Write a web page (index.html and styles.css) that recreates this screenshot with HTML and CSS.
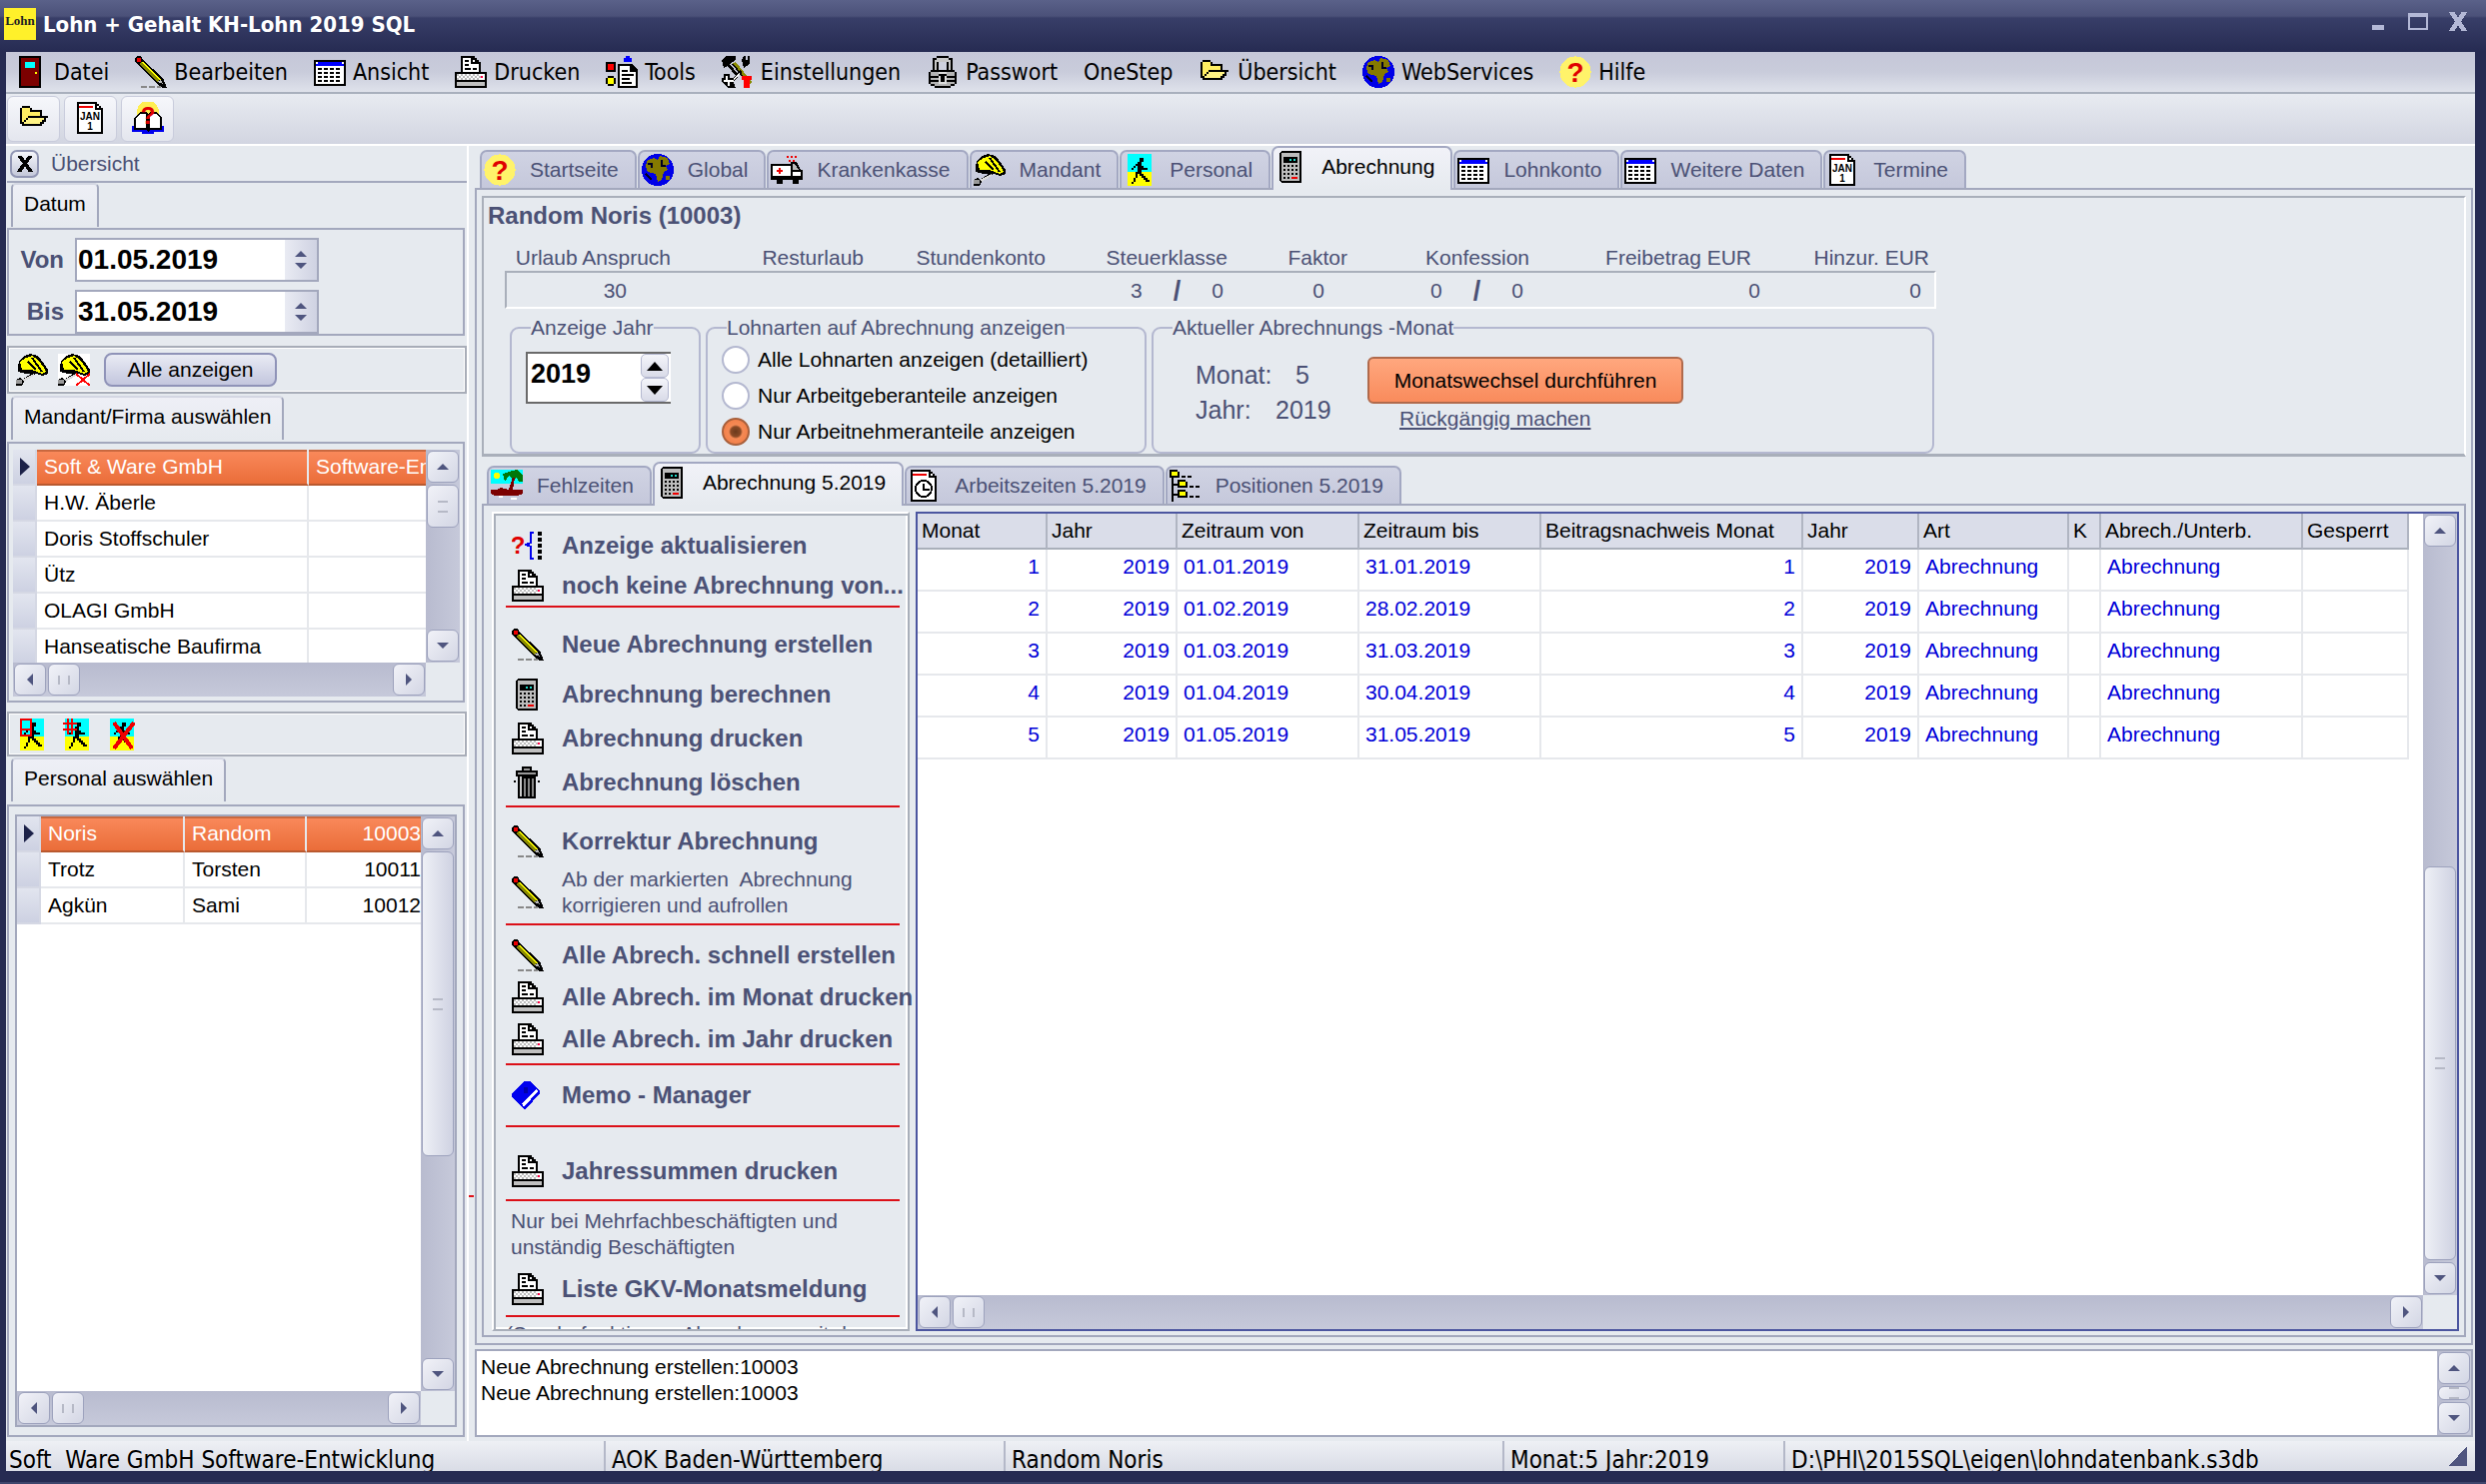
FILE: index.html
```html
<!DOCTYPE html>
<html lang="de">
<head>
  <meta charset="UTF-8">
  <title>Lohn + Gehalt KH-Lohn 2019 SQL</title>
  <link rel="stylesheet" href="styles.css">
</head>
<body>
  <!-- Icons, 16x16 Raster -->
  <svg class="sprite" aria-hidden="true">
    <symbol id="i-door" viewBox="0 0 16 16">
      <path d="M2 0h11v16H2z"/><path fill="#7c0000" d="M3 1h9v14H3z"/><path fill="#0ff" d="M5 3h5v3H5z"/><path fill="#ff0" d="M10 8h1v1h-1z"/>
    </symbol>
    <symbol id="i-pencil" viewBox="0 0 16 16">
      <path stroke="#888" stroke-dasharray="3 1" d="M3 15.500h10"/>
      <path d="M1 0h2l1 2 10 9 2 5h-2l-3-2L1 4 0 3V1z"/><path fill="#8a8a00" d="M2 4l1-1 9 9-1 1z"/><path fill="#ff0" d="M3 3l1 0 9 9-1 0z"/>
      <path fill="#e00" d="M1 1h2v2H1z"/><path fill="#bbb" d="M11 13l2-1 1 2z"/>
    </symbol>
    <symbol id="i-table" viewBox="0 0 16 16">
      <path d="M0 2h16v13H0z"/><path fill="#fff" d="M1 5h14v9H1z"/><path fill="#00f" d="M1 3h14v2H1z"/><path fill="#fff" d="M1 3h1v1H1zM14 3h1v1h-1z"/>
      <path stroke="#000" stroke-dasharray="2 1" d="M2 6.500h12M2 8.500h12M2 10.500h12M2 12.500h12"/>
    </symbol>
    <symbol id="i-printer" viewBox="0 0 16 16">
      <path d="M3 0h7v1h1v1h1v1h1v6H3z"/><path fill="#fff" d="M4 1h4v3h4v4H4z"/><path fill="#fff" d="M9 2h1v1H9z"/>
      <path stroke="#000" d="M5 2.500h2M5 4.500h2M5 6.500h3M9 6.500h2"/>
      <path d="M0 8h16v8H0z"/><path fill="#fff" d="M1 9h14v3H1z"/><path stroke="#bbb" stroke-dasharray="1 1" d="M1 9.500h12M2 10.500h11M1 11.500h12"/>
      <path fill="#f04" d="M13 10h1v1h-1z"/><path fill="#c0c0c0" d="M1 13h14v2H1z"/>
    </symbol>
    <symbol id="i-tools" viewBox="0 0 16 16">
      <path d="M0 3h5v5H0z"/><path fill="#f00" d="M1 4h3v3H1z"/><path fill="#00f" d="M10 0h2v1h1v2H9V1h1z"/>
      <path d="M1 10h3v1h1v3H4v1H1v-1H0v-3h1z"/><path fill="#ff0" d="M1 11h3v3H1z"/>
      <path d="M6 4h7l3 3v9H6z"/><path fill="#fff" d="M7 5h5v3h3v7H7z"/><path stroke="#000" d="M8 7.500h3M8 9.500h6M8 11.500h4M8 13.500h5"/>
    </symbol>
    <symbol id="i-settings" viewBox="0 0 16 16">
      <path d="M0 2l2-2h5v2L4 4l4 5-1 1-4-5-2 1zM10 2l1-2h1v2h1V0h1v4l-3 2z"/>
      <path fill="#8a8a00" d="M5 4l2-1 8 10-1 1z"/><path fill="#000" d="M5 4h1l8 10h-1z"/>
      <path d="M1 9h3v2h2l3-4 1 1-4 5 1 3H3l-3-3v-2h1z"/><path fill="#fff" d="M2 10h1v2h3v1H4v2H3v-2H1v-1h1zM6 11l3-3v1l-3 3z"/>
      <path fill="#f00" d="M10 10h5v2h-1v4h-3v-4h-1z"/>
    </symbol>
    <symbol id="i-lock" viewBox="0 0 16 16">
      <path d="M5 0h6v1h2v6h1v1h1v6h-1v1h-2v1H4v-1H2v-1H1V8h1V7h1V1h2z"/><path fill="#c8c8c8" d="M5 1h6v1h1v5H4V2h1z"/><path d="M5 3h6v4H5z"/><path fill="#ced1de" d="M6 3h4v4H6z"/>
      <path fill="#b4b4b4" d="M2 8h12v2H2zM2 11h12v1H2zM2 13h12v1H2zM4 14h8v1H4z"/><path fill="#ddd" d="M6 8h4v6H6z"/><path d="M6 9h4v1H9v3H7v-3H6z"/>
    </symbol>
    <symbol id="i-folder" viewBox="0 0 16 16">
      <path d="M1 3h1V2h4v1h1v1h5v3h3v1h-1v2h-1v1h-1v1H2v-1H1z"/><path fill="#ffee62" d="M2 3h4v2h5v2H5v1H4v1H3v1H2z"/><path fill="#fff384" d="M5 8h8v1h-1v1h-1v1H3v-1h1V9h1z"/>
    </symbol>
    <symbol id="i-globe" viewBox="0 0 16 16">
      <circle cx="8" cy="8" r="8" fill="#0000e8"/><path fill="#857a00" d="M3 3l3-1 2 1 1-2 4 1 1 3-2 1 1 2-2 1-1 4-2 1-1-4-4-1-1-3zM12 11h2v2h-2z"/>
      <path stroke="#002" fill="none" d="M3 5h2v2M10 3v3h2M2 10l3 3"/>
    </symbol>
    <symbol id="i-help" viewBox="0 0 16 16">
      <circle cx="8" cy="8" r="7.800" fill="#fff36a"/>
    </symbol>
    <symbol id="i-date" viewBox="0 0 16 16">
      <path d="M1 0h10v1h1v1h1v1h1v13H1z"/><path fill="#fff" d="M2 1h8v3h3v11H2z"/><path fill="#fff" d="M11 2h1v1h-1z"/><path fill="#e00" d="M2 2h7v1H2z"/>
    </symbol>
    <symbol id="i-manual" viewBox="0 0 16 16">
      <circle cx="8" cy="5" r="5.500" fill="#ffef52"/><path fill="#00e" d="M0 12h16v3h-5v1H5v-1H0z"/>
      <path d="M1 8l3-3h3l1 1 1-1h3l3 3v6h-6l-1 1-1-1H1z"/><path fill="#fff" d="M2 8l2-2h3v7H2zM9 6h3l2 2v5H9z"/>
    </symbol>
    <symbol id="i-ambulance" viewBox="0 0 16 16">
      <path stroke="#e00" stroke-dasharray="1 1" d="M8 1.500h5M9 3.500h4"/><path d="M0 5h10v-1h3l2 4h1v5h-2v2h-3v-2H6v2H3v-2H0z"/>
      <path fill="#fff" d="M1 6h9v5H1zM11 9h4v2h-4z"/><path fill="#bbb" d="M11 5h1l2 3h-3z"/><path fill="#e00" d="M3 8h3v1H3zM4 7h1v3H4z"/>
    </symbol>
    <symbol id="i-helmet" viewBox="0 0 16 16">
      <path d="M2 3l2-2 3-1 4 1 3 4 2 3v2l-3 1-3-1-5 0-4-1V6z"/><path fill="#ff0" d="M2 4l3-2 3-1 3 2 3 4 1 2-2 1-5-2-5 0z"/><path fill="none" stroke="#000" d="M8 2l5 7M6 4l4 4"/>
      <path d="M0 13l2-1 1 1 6-4 1 1-6 4-1 2H0z"/><path fill="#ddd" d="M3 13l6-3 0 1-5 3z"/><path fill="#999" d="M0 13h3v2H0z"/>
    </symbol>
    <symbol id="i-helmet-x" viewBox="0 0 16 16">
      <path fill="#fff" d="M0 0h16v16H0z"/><use href="#i-helmet"/><path stroke="#f00" d="M9 10l7 6M16 10l-7 6"/>
    </symbol>
    <symbol id="i-runner" viewBox="0 0 16 16">
      <path fill="#0ff" d="M2 0h12v9H2z"/><path fill="#ff0" d="M2 9h12v7H2z"/>
      <path d="M8 2h2v2H8zM7 4h2v2h1v1h2v1H9v2h1v1h1v1h1v1h1v1h-2v-1h-1v-1H9v-1H8v-1H7v2H6v2H5v1H4v-1h1v-2h1V9h1V6H6v1H5v1H4V7h1V6h1V5h1z"/>
    </symbol>
    <symbol id="i-runner-box" viewBox="0 0 16 16">
      <use href="#i-runner"/><path fill="none" stroke="#e00" d="M2.500 .5h5v8h-5zM2 5.500h5"/>
    </symbol>
    <symbol id="i-runner-grid" viewBox="0 0 16 16">
      <use href="#i-runner"/><path stroke="#e00" d="M3.500 0v8M5.500 0v8M1 2.500h7M1 5.500h7"/>
    </symbol>
    <symbol id="i-runner-x" viewBox="0 0 16 16">
      <use href="#i-runner"/><path stroke="#e00" stroke-width="2" d="M4 2l9 13M14 2L4 15"/>
    </symbol>
    <symbol id="i-calc" viewBox="0 0 16 16">
      <path d="M3 0h10v16H3l-1-1V1z"/><path fill="#bcbcbc" d="M3 1h9v14H3z"/><path d="M4 3h7v3H4z"/><path fill="#2dc" d="M7 4h1v1H7zM9 4h1v1H9z"/>
      <path stroke="#000" stroke-dasharray="1 1" d="M4 7.500h8M4 9.500h8M4 11.500h8M4 13.500h4"/><path fill="#e00" d="M8 13h3v1H8z"/>
    </symbol>
    <symbol id="i-beach" viewBox="0 0 16 16">
      <path fill="#0ff" d="M0 0h16v7H0z"/><circle cx="3" cy="3" r="1.500" fill="#ff0"/><path fill="#00780a" d="M6 2l3-1 4-1 3 3v3l-2 0-1-2-2 1-2-2-2 3z"/>
      <path fill="#7c0000" d="M11 4h1l-1 6h5v2l-3 1H2l-2-1v-2l3 0 2-1 4 1z"/><path fill="#fff" d="M4 13h2v1H4zM10 14h3v1h-3z"/>
    </symbol>
    <symbol id="i-clock" viewBox="0 0 16 16">
      <path d="M1 0h10v1h1v1h1v1h1v13H1z"/><path fill="#fff" d="M2 1h8v3h3v11H2z"/><path fill="#fff" d="M11 2h1v1h-1z"/><path fill="#e00" d="M2 2h7v1H2z"/>
      <circle cx="7.500" cy="9.500" r="4" fill="#fff" stroke="#000"/><path fill="none" stroke="#000" d="M7.500 7v3h3"/>
    </symbol>
    <symbol id="i-tree" viewBox="0 0 16 16">
      <path stroke="#000" d="M1.500 3v13M1 7.500h4M1 12.500h4"/><path stroke="#000" stroke-dasharray="2 1" d="M6 3.500h6M10 8.500h6M10 13.500h6"/>
      <path d="M0 0h4v1h1v3H0zM4 5h4v1h1v3H4zM4 10h4v1h1v3H4z"/><path fill="#ff0" d="M1 1h3v2H1zM5 6h3v2H5zM5 11h3v2H5z"/>
    </symbol>
    <symbol id="i-refresh" viewBox="0 0 16 16">
      <path fill="none" stroke="#00e" d="M11 1.500H9.500v5L7 7.500l2.500 1v6H11"/><path stroke="#000" stroke-width="2" stroke-dasharray="2 1" d="M14 1v14"/>
    </symbol>
    <symbol id="i-trash" viewBox="0 0 16 16">
      <path d="M5 0h5v2h3v3h-1v11H3V5H2V2h3z"/><path fill="#999" d="M6 1h3v1H6zM3 3h9v1H3z"/><path fill="#ccc" d="M4 5h1v10H4z"/><path fill="#888" d="M6 6h1v9H6zM8 6h1v9H8zM10 6h1v9h-1z"/>
      <path d="M1 7h1v1H1zM13 7h1v1h-1z"/>
    </symbol>
    <symbol id="i-memo" viewBox="0 0 16 16">
      <path fill="#00e" d="M6 1h3l5 5v1l-7 8H6L0 9V7z"/><path fill="#fff" d="M12 5l1 1-7 8-1-2z"/><path fill="#00a" d="M6 4h2v3H6z"/>
    </symbol>
  </svg>

  <div class="window">
    <header class="titlebar">
      <span class="app-logo">Lohn</span>
      <h1>Lohn + Gehalt KH-Lohn 2019 SQL</h1>
      <div class="win-buttons">
        <button aria-label="Minimieren"><svg viewBox="0 0 16 16"><path d="M3 11h10v4H3z"/></svg></button>
        <button aria-label="Maximieren"><svg viewBox="0 0 24 20"><path fill-rule="evenodd" d="M0 0h24v20H0zM2 4v14h20V4z"/></svg></button>
        <button aria-label="Schließen"><svg viewBox="0 0 20 20"><path d="M0 0h6l4 6 4-6h6l-7 10 7 10h-6l-4-6-4 6H0l7-10z"/></svg></button>
      </div>
    </header>

    <nav class="menubar">
      <button><svg><use href="#i-door"/></svg>Datei</button>
      <button><svg><use href="#i-pencil"/></svg>Bearbeiten</button>
      <button><svg><use href="#i-table"/></svg>Ansicht</button>
      <button><svg><use href="#i-printer"/></svg>Drucken</button>
      <button><svg><use href="#i-tools"/></svg>Tools</button>
      <button><svg><use href="#i-settings"/></svg>Einstellungen</button>
      <button><svg><use href="#i-lock"/></svg>Passwort</button>
      <button>OneStep</button>
      <button><svg><use href="#i-folder"/></svg>Übersicht</button>
      <button><svg><use href="#i-globe"/></svg>WebServices</button>
      <button><svg viewBox="0 0 16 16"><use href="#i-help"/><text x="8" y="13" class="g-help">?</text></svg>Hilfe</button>
    </nav>

    <div class="toolbar">
      <button aria-label="Öffnen"><svg><use href="#i-folder"/></svg></button>
      <button aria-label="Termine"><svg viewBox="0 0 16 16"><use href="#i-date"/><text x="7.500" y="9" class="g-jan">JAN</text><text x="7.500" y="14" class="g-jan">1</text></svg></button>
      <button aria-label="Handbuch"><svg viewBox="0 0 16 16"><use href="#i-manual"/><text x="8" y="11" class="g-help small">?</text></svg></button>
    </div>

    <div class="workspace">
      <aside class="sidebar">
        <div class="side-head">
          <button class="close-btn" aria-label="Übersicht schließen"><svg viewBox="0 0 20 20"><path d="M0 0h6l4 6 4-6h6l-7 10 7 10h-6l-4-6-4 6H0l7-10z"/></svg></button>
          <span>Übersicht</span>
        </div>

        <div class="side-tab first"><button>Datum</button></div>
        <div class="side-panel dates">
          <div class="date-row">
            <label for="von">Von</label>
            <div class="date-input"><input id="von" type="text" value="01.05.2019"><span class="spin"><button class="up" aria-label="Von später"></button><button class="down" aria-label="Von früher"></button></span></div>
          </div>
          <div class="date-row">
            <label for="bis">Bis</label>
            <div class="date-input"><input id="bis" type="text" value="31.05.2019"><span class="spin"><button class="up" aria-label="Bis später"></button><button class="down" aria-label="Bis früher"></button></span></div>
          </div>
        </div>

        <div class="side-tools">
          <button class="tool" aria-label="Mandant"><svg><use href="#i-helmet"/></svg></button>
          <button class="tool" aria-label="Mandant löschen"><svg><use href="#i-helmet-x"/></svg></button>
          <button class="show-all">Alle anzeigen</button>
        </div>

        <div class="side-tab"><button>Mandant/Firma auswählen</button></div>
        <div class="side-panel firms">
          <div class="scroll-box">
            <div class="view">
              <table class="list firm-list">
                <tr class="selected"><td class="ind"><i></i></td><td>Soft &amp; Ware GmbH</td><td>Software-Entwicklung</td></tr>
                <tr><td class="ind"></td><td>H.W. Äberle</td><td></td></tr>
                <tr><td class="ind"></td><td>Doris Stoffschuler</td><td></td></tr>
                <tr><td class="ind"></td><td>Ütz</td><td></td></tr>
                <tr><td class="ind"></td><td>OLAGI GmbH</td><td></td></tr>
                <tr><td class="ind"></td><td>Hanseatische Baufirma</td><td></td></tr>
              </table>
            </div>
            <div class="vbar"><button class="up" aria-label="Hoch"></button><span class="thumb short"></span><span class="fill"></span><button class="down" aria-label="Runter"></button></div>
            <div class="hbar"><button class="left" aria-label="Links"></button><span class="thumb"></span><span class="fill"></span><button class="right" aria-label="Rechts"></button></div>
          </div>
        </div>

        <div class="side-tools persons">
          <button class="tool" aria-label="Personal"><svg><use href="#i-runner-box"/></svg></button>
          <button class="tool" aria-label="Personal Nummer"><svg><use href="#i-runner-grid"/></svg></button>
          <button class="tool" aria-label="Personal löschen"><svg><use href="#i-runner-x"/></svg></button>
        </div>

        <div class="side-tab tight"><button>Personal auswählen</button></div>
        <div class="side-panel staff">
          <div class="scroll-box">
            <div class="view">
              <table class="list staff-list">
                <tr class="selected"><td class="ind"><i></i></td><td>Noris</td><td>Random</td><td class="num">10003</td></tr>
                <tr><td class="ind"></td><td>Trotz</td><td>Torsten</td><td class="num">10011</td></tr>
                <tr><td class="ind"></td><td>Agkün</td><td>Sami</td><td class="num">10012</td></tr>
              </table>
            </div>
            <div class="vbar"><button class="up" aria-label="Hoch"></button><span class="thumb long"></span><span class="fill"></span><button class="down" aria-label="Runter"></button></div>
            <div class="hbar"><button class="left" aria-label="Links"></button><span class="thumb"></span><span class="fill"></span><button class="right" aria-label="Rechts"></button></div>
          </div>
        </div>
      </aside>
      <div class="splitter"><span></span></div>

      <main class="main">
        <div class="tabs">
          <button><svg viewBox="0 0 16 16"><use href="#i-help"/><text x="8" y="13" class="g-help">?</text></svg>Startseite</button>
          <button><svg><use href="#i-globe"/></svg>Global</button>
          <button><svg><use href="#i-ambulance"/></svg>Krankenkasse</button>
          <button><svg><use href="#i-helmet"/></svg>Mandant</button>
          <button><svg><use href="#i-runner"/></svg>Personal</button>
          <button class="active"><svg><use href="#i-calc"/></svg>Abrechnung</button>
          <button><svg><use href="#i-table"/></svg>Lohnkonto</button>
          <button><svg><use href="#i-table"/></svg>Weitere Daten</button>
          <button><svg viewBox="0 0 16 16"><use href="#i-date"/><text x="7.500" y="9" class="g-jan">JAN</text><text x="7.500" y="14" class="g-jan">1</text></svg>Termine</button>
        </div>

        <div class="page">
          <section class="person">
            <h2>Random Noris (10003)</h2>
            <div class="fact-labels">
              <span>Urlaub Anspruch</span><span>Resturlaub</span><span>Stundenkonto</span><span>Steuerklasse</span><span>Faktor</span><span>Konfession</span><span>Freibetrag EUR</span><span>Hinzur. EUR</span>
            </div>
            <div class="fact-values">
              <span>30</span>
              <span class="pair">3<b>/</b>0</span>
              <span>0</span>
              <span class="pair">0<b>/</b>0</span>
              <span>0</span>
              <span>0</span>
            </div>

            <div class="groups">
              <fieldset class="year">
                <legend>Anzeige Jahr</legend>
                <div class="year-input">
                  <input type="text" value="2019" aria-label="Anzeige Jahr">
                  <span class="year-spin"><button class="up" aria-label="Jahr vor"></button><button class="down" aria-label="Jahr zurück"></button></span>
                </div>
              </fieldset>
              <fieldset class="kinds">
                <legend>Lohnarten auf Abrechnung anzeigen</legend>
                <label><input type="radio" name="lohnarten">Alle Lohnarten anzeigen (detailliert)</label>
                <label><input type="radio" name="lohnarten">Nur Arbeitgeberanteile anzeigen</label>
                <label><input type="radio" name="lohnarten" checked>Nur Arbeitnehmeranteile anzeigen</label>
              </fieldset>
              <fieldset class="month">
                <legend>Aktueller Abrechnungs -Monat</legend>
                <dl>
                  <dt>Monat:</dt><dd>5</dd>
                  <dt>Jahr:</dt><dd>2019</dd>
                </dl>
                <div class="month-change">
                  <button>Monatswechsel durchführen</button>
                  <a href="#">Rückgängig machen</a>
                </div>
              </fieldset>
            </div>
          </section>

          <div class="tabs sub">
            <button><svg><use href="#i-beach"/></svg>Fehlzeiten</button>
            <button class="active"><svg><use href="#i-calc"/></svg>Abrechnung 5.2019</button>
            <button><svg><use href="#i-clock"/></svg>Arbeitszeiten 5.2019</button>
            <button><svg><use href="#i-tree"/></svg>Positionen 5.2019</button>
          </div>

          <div class="subpage">
            <div class="actions">
              <div class="act-group a1">
                <button><svg viewBox="0 0 16 16"><use href="#i-refresh"/><text x="3" y="12" class="g-help small">?</text></svg>Anzeige aktualisieren</button>
                <button><svg><use href="#i-printer"/></svg>noch keine Abrechnung von...</button>
              </div>
              <hr>
              <div class="act-group a2">
                <button><svg><use href="#i-pencil"/></svg>Neue Abrechnung erstellen</button>
                <button><svg><use href="#i-calc"/></svg>Abrechnung berechnen</button>
                <button><svg><use href="#i-printer"/></svg>Abrechnung drucken</button>
                <button><svg><use href="#i-trash"/></svg>Abrechnung löschen</button>
              </div>
              <hr>
              <div class="act-group a3">
                <button><svg><use href="#i-pencil"/></svg>Korrektur Abrechnung</button>
                <button class="two-line"><svg><use href="#i-pencil"/></svg><span>Ab der markierten&nbsp; Abrechnung<br>korrigieren und aufrollen</span></button>
              </div>
              <hr>
              <div class="act-group a4">
                <button><svg><use href="#i-pencil"/></svg>Alle Abrech. schnell erstellen</button>
                <button><svg><use href="#i-printer"/></svg>Alle Abrech. im Monat drucken</button>
                <button><svg><use href="#i-printer"/></svg>Alle Abrech. im Jahr drucken</button>
              </div>
              <hr>
              <div class="act-group a5">
                <button><svg><use href="#i-memo"/></svg>Memo - Manager</button>
              </div>
              <hr>
              <div class="act-group a6">
                <button><svg><use href="#i-printer"/></svg>Jahressummen drucken</button>
              </div>
              <hr>
              <div class="act-group a7">
                <p>Nur bei Mehrfachbeschäftigten und<br>unständig Beschäftigten</p>
                <button><svg><use href="#i-printer"/></svg>Liste GKV-Monatsmeldung</button>
              </div>
              <hr>
              <p class="more">(Sonderfunktionen Abrechnung mit der</p>
            </div>

            <div class="scroll-box results">
              <div class="view">
                <table class="payroll">
                  <thead>
                    <tr><th class="c-m">Monat</th><th class="c-m">Jahr</th><th class="c-d">Zeitraum von</th><th class="c-d">Zeitraum bis</th><th class="c-b">Beitragsnachweis Monat</th><th class="c-j">Jahr</th><th class="c-a">Art</th><th class="c-k">K</th><th class="c-u">Abrech./Unterb.</th><th class="c-g">Gesperrt</th></tr>
                  </thead>
                  <tbody>
                    <tr><td class="num">1</td><td class="num">2019</td><td>01.01.2019</td><td>31.01.2019</td><td class="num">1</td><td class="num">2019</td><td>Abrechnung</td><td></td><td>Abrechnung</td><td></td></tr>
                    <tr><td class="num">2</td><td class="num">2019</td><td>01.02.2019</td><td>28.02.2019</td><td class="num">2</td><td class="num">2019</td><td>Abrechnung</td><td></td><td>Abrechnung</td><td></td></tr>
                    <tr><td class="num">3</td><td class="num">2019</td><td>01.03.2019</td><td>31.03.2019</td><td class="num">3</td><td class="num">2019</td><td>Abrechnung</td><td></td><td>Abrechnung</td><td></td></tr>
                    <tr><td class="num">4</td><td class="num">2019</td><td>01.04.2019</td><td>30.04.2019</td><td class="num">4</td><td class="num">2019</td><td>Abrechnung</td><td></td><td>Abrechnung</td><td></td></tr>
                    <tr><td class="num">5</td><td class="num">2019</td><td>01.05.2019</td><td>31.05.2019</td><td class="num">5</td><td class="num">2019</td><td>Abrechnung</td><td></td><td>Abrechnung</td><td></td></tr>
                  </tbody>
                </table>
              </div>
              <div class="vbar"><button class="up" aria-label="Hoch"></button><span class="fill"></span><span class="thumb half"></span><button class="down" aria-label="Runter"></button></div>
              <div class="hbar"><button class="left" aria-label="Links"></button><span class="thumb"></span><span class="fill"></span><button class="right" aria-label="Rechts"></button></div>
            </div>
          </div>
        </div>

        <div class="log">
          <div class="log-text">
            <p>Neue Abrechnung erstellen:10003</p>
            <p>Neue Abrechnung erstellen:10003</p>
          </div>
          <div class="vbar"><button class="up" aria-label="Hoch"></button><span class="thumb tiny"></span><button class="down" aria-label="Runter"></button></div>
        </div>
      </main>
    </div>

    <footer class="statusbar">
      <span class="s1">Soft&nbsp; Ware GmbH Software-Entwicklung</span>
      <span class="s2">AOK Baden-Württemberg</span>
      <span class="s3">Random Noris</span>
      <span class="s4">Monat:5 Jahr:2019</span>
      <span class="s5">D:\PHI\2015SQL\eigen\lohndatenbank.s3db</span>
      <svg class="grip" viewBox="0 0 18 20"><path d="M18 0v20H0z"/></svg>
    </footer>
  </div>
</body>
</html>
```
FILE: styles.css
```css
* {
  box-sizing: border-box;
}

body {
  margin: 0;
  background: #262b52;
  font-family: "Liberation Sans", Arial, sans-serif;
  font-size: 21px;
  line-height: 26px;
  color: #4b5175;
}

button, input {
  font: inherit;
  color: inherit;
}

button {
  border: none;
  background: none;
  padding: 0;
  white-space: nowrap;
}

h1, h2, p, dl, dd, fieldset, hr {
  margin: 0;
}

svg {
  width: 32px;
  height: 32px;
  flex: none;
  shape-rendering: crispEdges;
}

.sprite {
  position: absolute;
  width: 0;
  height: 0;
}

/* Zeichen in den Icons */
.g-help {
  font: bold 14px "Liberation Sans", sans-serif;
  fill: #e00000;
  text-anchor: middle;
}

.g-help.small {
  font-size: 12px;
}

.g-jan {
  font: bold 5px "Liberation Sans", sans-serif;
  fill: #000;
  text-anchor: middle;
}

.window {
  display: flex;
  flex-direction: column;
  height: 100vh;
  padding: 0 11px 11px 6px;
  background: #262b52;
  border-bottom: 2px solid #3f456c;
}

/* Titelleiste */
.titlebar {
  display: flex;
  align-items: center;
  flex: none;
  height: 52px;
  margin: 0 -11px 0 -6px;
  padding: 0 18px 4px 4px;
  background: linear-gradient(#5a6189 0, #4b5179 16px, #383e68 18px, #262b52 100%);
}

.app-logo {
  width: 32px;
  height: 32px;
  background: #fff02a;
  color: #222;
  font: bold 13px/26px "Liberation Serif", serif;
  text-align: center;
}

.titlebar h1 {
  flex: 1;
  margin-left: 7px;
  color: #fff;
  font: bold 22px "DejaVu Sans Condensed", "DejaVu Sans", sans-serif;
}

.win-buttons {
  display: flex;
  gap: 20px;
}

.win-buttons svg {
  width: 20px;
  height: 19px;
  fill: #b3b8d6;
}

/* Menü */
.menubar {
  display: flex;
  align-items: center;
  flex: none;
  gap: 26px;
  height: 42px;
  padding-left: 9px;
  background: linear-gradient(#c5c7d8 0, #c9ccdb 50%, #dfe2eb 100%);
  border-bottom: 2px solid #a9b0bd;
  color: #000;
  font: 23px "DejaVu Sans Condensed", "DejaVu Sans", sans-serif;
}

.menubar button {
  display: flex;
  align-items: center;
  gap: 7px;
}

.toolbar {
  display: flex;
  flex: none;
  gap: 4px;
  height: 52px;
  padding: 2px 1px;
  background: linear-gradient(#e8ebf1, #d2d5e1);
  border-bottom: 2px solid #fff;
}

.toolbar button {
  width: 53px;
  height: 46px;
  padding-top: 4px;
  background: linear-gradient(#f6f7fb, #e4e6ee);
  border: 1px solid #c9ccdc;
  border-radius: 6px;
}

.workspace {
  display: flex;
  flex: 1;
  min-height: 0;
  background: #e6eaef;
}

/* Linke Spalte */
.sidebar {
  display: flex;
  flex-direction: column;
  flex: none;
  width: 461px;
  padding: 0 0 4px 1px;
}

.side-head {
  display: flex;
  align-items: center;
  gap: 12px;
  height: 35px;
  padding-left: 3px;
}

.close-btn {
  width: 29px;
  height: 28px;
  line-height: 0;
  background: linear-gradient(#f4f5fa, #c4c8da);
  border: 2px solid #9196b4;
  border-radius: 7px;
}

.close-btn svg {
  width: 16px;
  height: 17px;
}

.side-tab {
  flex: none;
  height: 48px;
  padding: 2px 0 0 4px;
}

.side-tab.first {
  height: 47px;
  border-top: 2px solid #a3a8bd;
  padding-top: 0;
}

.side-tab.tight {
  padding-top: 1px;
}

.side-tab button {
  height: 44px;
  padding: 0 11px 5px;
  color: #000;
  background: linear-gradient(#eeeff6, #e6eaef);
  border: 2px solid #a3a8bd;
  border-top-color: #d4d7e3;
  border-bottom: none;
  border-radius: 5px 5px 0 0;
}

.side-panel {
  flex: none;
  width: 458px;
  border: 2px solid #a3a8bd;
}

.dates {
  height: 108px;
  padding: 8px 9px;
}

.date-row {
  display: flex;
  align-items: center;
  gap: 11px;
  height: 44px;
  margin-bottom: 8px;
}

.date-row label {
  width: 46px;
  text-align: right;
  font-weight: bold;
  font-size: 24px;
}

.date-input {
  display: flex;
  width: 244px;
  height: 44px;
  background: #fff;
  border: 2px solid #a3a8bd;
}

.date-input input {
  width: 208px;
  padding: 0 1px;
  border: none;
  background: none;
  color: #000;
  font-size: 28px;
  font-weight: bold;
}

.spin {
  display: flex;
  flex-direction: column;
  justify-content: center;
  align-items: center;
  gap: 3px;
  width: 33px;
  background: linear-gradient(90deg, #e9ebf3, #cfd2e2);
}

.spin button {
  height: 9px;
}

/* Pfeile */
.up::after, .down::after, .left::after, .right::after {
  content: "";
  display: block;
  width: 0;
  height: 0;
  margin: auto;
  border: 6px solid transparent;
}

.up::after {
  border-top-width: 0;
  border-bottom-color: #4f557f;
}

.down::after {
  border-bottom-width: 0;
  border-top-color: #4f557f;
}

.left::after {
  border-left-width: 0;
  border-right-color: #4f557f;
}

.right::after {
  border-right-width: 0;
  border-left-color: #4f557f;
}

.side-tools {
  display: flex;
  align-items: center;
  flex: none;
  gap: 10px;
  height: 48px;
  margin-top: 10px;
  padding: 0 7px;
  border: 2px solid #a8adb8;
  outline: 1px solid #fff;
  outline-offset: -3px;
}

.side-tools .tool {
  height: 32px;
}

.side-tools.persons {
  gap: 13px;
  height: 45px;
  margin-top: 9px;
}

.show-all {
  width: 173px;
  height: 34px;
  margin-left: 4px;
  color: #000;
  background: linear-gradient(#e9ebf4, #c3c6de);
  border: 2px solid #8f93b8;
  border-radius: 8px;
}

.firms {
  height: 261px;
  padding: 6px 3px 4px 4px;
}

.staff {
  flex: 1;
  padding: 8px 6px;
}

.staff .scroll-box {
  border: 2px solid #a3a8bd;
}

/* Rahmen mit Rollbalken */
.scroll-box {
  display: grid;
  grid-template-columns: minmax(0, 1fr) 34px;
  grid-template-rows: minmax(0, 1fr) 34px;
  height: 100%;
}

.view {
  overflow: hidden;
  background: #fff;
}

.vbar, .hbar {
  display: flex;
  gap: 2px;
  padding: 1px;
  background: linear-gradient(90deg, #b8bbcf, #c6c9da);
}

.vbar {
  flex-direction: column;
}

.hbar {
  background: linear-gradient(#b8bbcf, #c6c9da);
}

.vbar button, .hbar button, .thumb {
  flex: none;
  width: 32px;
  height: 32px;
  background: linear-gradient(135deg, #f1f2f8, #d3d6e4);
  border: 1px solid #9da2bd;
  border-radius: 6px;
}

.fill {
  flex: 1;
}

.thumb {
  display: flex;
  align-items: center;
  justify-content: center;
}

.thumb::before {
  content: "";
  width: 8px;
  height: 9px;
  border: 2px solid #b6b9c6;
  border-top: none;
  border-bottom: none;
}

.vbar .thumb::before {
  width: 10px;
  height: 8px;
  border: 2px solid #b6b9c6;
  border-left: none;
  border-right: none;
}

.thumb.short {
  height: 43px;
}

.thumb.long {
  height: 305px;
  background: linear-gradient(90deg, #eef0f6, #cfd2e2);
}

.thumb.half {
  height: 394px;
  background: linear-gradient(90deg, #eef0f6, #cfd2e2);
}

.log .thumb.tiny {
  flex: 1;
  height: auto;
}

/* Auswahllisten */
.list {
  table-layout: fixed;
  border-collapse: separate;
  border-spacing: 0;
  color: #000;
}

.firm-list {
  width: 560px;
}

.staff-list {
  width: 404px;
}

.list td {
  height: 36px;
  padding: 0 0 0 7px;
  border-right: 2px solid #e6e8ec;
  border-bottom: 2px solid #e6e8ec;
  white-space: nowrap;
}

.list .ind {
  width: 24px;
  padding: 0 0 0 7px;
  background: linear-gradient(#e2e5ef, #cdd1e2);
  border-color: #d5d8e4;
}

.list .ind i {
  display: block;
  width: 0;
  border: 9px solid transparent;
  border-left: 10px solid #1c2148;
  border-right: none;
}

.firm-list td:nth-child(2) {
  width: 272px;
}

.staff-list td:nth-child(2) {
  width: 144px;
}

.staff-list td:nth-child(3) {
  width: 122px;
}

.staff-list .num {
  padding: 0;
  border-right: none;
}

.num {
  text-align: right;
}

.selected td:not(.ind) {
  color: #fff;
  background: linear-gradient(#fa8a5c, #ea6d39);
  border-bottom-color: #b9592f;
  box-shadow: inset 0 2px #c9683f;
}

.splitter {
  display: flex;
  align-items: flex-end;
  flex: none;
  width: 7px;
  border-left: 2px solid #fff;
}

.splitter span {
  width: 5px;
  height: 2px;
  margin-bottom: 244px;
  background: #e01018;
}

/* Hauptbereich */
.main {
  display: flex;
  flex-direction: column;
  flex: 1;
  min-width: 0;
  padding: 0 2px 4px 1px;
}

.tabs {
  display: flex;
  align-items: flex-end;
  flex: none;
  gap: 1px;
  height: 42px;
  padding-left: 5px;
}

.tabs button {
  display: flex;
  align-items: center;
  gap: 14px;
  height: 38px;
  padding: 0 16px 0 2px;
  background: linear-gradient(#d0d3e3, #c5c8db);
  border: 2px solid #a3a8c2;
  border-bottom: none;
  border-radius: 7px 7px 0 0;
}

.tabs .active {
  height: 44px;
  margin-bottom: -2px;
  padding-bottom: 5px;
  z-index: 1;
  color: #000;
  background: linear-gradient(#f1f2f8, #e6eaef);
}

.page {
  display: flex;
  flex-direction: column;
  flex: 1;
  min-height: 0;
  padding: 6px 5px 6px 5px;
  border: 2px solid #a3a8bd;
}

.person {
  flex: none;
  height: 261px;
  padding: 5px 0 0 4px;
  border: 2px solid #a9afba;
  border-right-color: #fff;
  border-bottom-width: 3px;
}

.person h2 {
  font-size: 24px;
  line-height: 26px;
}

.fact-labels, .fact-values {
  display: grid;
  width: 1432px;
  margin-left: 17px;
  text-align: right;
}

.fact-labels {
  grid-template-columns: 166px 193px 182px 182px 120px 182px 222px 178px;
  margin-top: 16px;
}

.fact-values {
  grid-template-columns: 120px 597px 101px 199px 237px 161px;
  height: 38px;
  line-height: 36px;
  border: 2px solid #a9afba;
  border-right-color: #fff;
  border-bottom-color: #fff;
}

.pair {
  display: flex;
  justify-content: flex-end;
  gap: 31px;
}

.pair b {
  font-size: 27px;
}

.groups {
  display: flex;
  gap: 5px;
  margin: 6px 0 0 22px;
}

.groups fieldset {
  height: 139px;
  padding: 0 14px;
  border: 2px solid #b4b8d0;
  border-radius: 9px;
}

legend {
  padding: 0;
  margin-left: 5px;
}

.year {
  width: 191px;
}

.groups .kinds {
  width: 441px;
  padding-top: 1px;
}

.month {
  display: flex;
  width: 783px;
}

.year-input {
  display: flex;
  width: 145px;
  height: 52px;
  margin-top: 11px;
  background: #fff;
  border: 2px solid #6a6a6a;
  border-right: none;
}

.year-input input {
  width: 113px;
  height: 40px;
  padding: 0 3px;
  border: none;
  background: none;
  color: #000;
  font-size: 27px;
  font-weight: bold;
}

.year-spin button {
  display: block;
  width: 28px;
  height: 24px;
  background: linear-gradient(#f4f5fa, #d9dbe8);
  border: 1px solid #b4b8d0;
  border-radius: 5px;
}

.year-spin .up::after {
  border-width: 0 8px 9px;
  border-bottom-color: #000;
}

.year-spin .down::after {
  border-width: 9px 8px 0;
  border-top-color: #000;
}

.kinds label {
  display: flex;
  align-items: center;
  gap: 8px;
  height: 36px;
  color: #000;
}

.kinds input {
  appearance: none;
  width: 28px;
  height: 28px;
  margin: 0;
  background: #fff;
  border: 2px solid #b4b8d0;
  border-radius: 50%;
}

.kinds input:checked {
  background: radial-gradient(#6b3a1c 0, #8a4a26 5px, #f58a55 7px, #f07840 100%);
  border-color: #a8603c;
}

.month dl {
  display: grid;
  grid-template-columns: 80px 60px;
  align-content: start;
  width: 200px;
  padding: 17px 0 0 28px;
  font-size: 25px;
  line-height: 35px;
}

.month dd:nth-of-type(1) {
  padding-left: 20px;
}

.month-change {
  display: flex;
  flex-direction: column;
  align-items: flex-start;
  padding-top: 16px;
}

.month-change button {
  width: 316px;
  height: 47px;
  color: #000;
  background: linear-gradient(#ffa77e, #f98b5c);
  border: 2px solid #b06a4c;
  border-radius: 6px;
}

.month-change a {
  margin: 2px 0 0 32px;
  color: inherit;
}

.tabs.sub {
  height: 47px;
}

.subpage {
  display: flex;
  flex: 1;
  gap: 6px;
  min-height: 0;
  padding: 6px 5px 4px 8px;
  border: 2px solid #a3a8bd;
}

/* Aktionen */
.actions {
  flex: none;
  width: 418px;
  padding: 2px 8px 0 12px;
  overflow-x: visible;
  overflow-y: clip;
  border: 2px solid #fff;
  border-right-color: #a9afba;
  border-bottom-color: #a9afba;
  box-shadow: inset 2px 2px #a9afba, inset -2px -2px #fff;
}

.actions hr {
  height: 2px;
  border: none;
  background: #dc1018;
}

.actions button {
  display: flex;
  align-items: center;
  gap: 18px;
  height: 44px;
  padding-left: 6px;
  font-size: 24px;
  font-weight: bold;
}

.a1 {
  padding-top: 10px;
}

.a1 button {
  height: 40px;
}

.a2 {
  padding: 15px 0 1px;
}

.a2 button:first-child {
  margin-bottom: 6px;
}

.a3 {
  padding: 12px 0 2px;
}

.actions .two-line {
  height: 58px;
  font-size: 21px;
  font-weight: normal;
  text-align: left;
}

.a4 {
  padding: 9px 0 3px;
}

.a4 button {
  height: 42px;
}

.a5 {
  padding: 8px 0;
}

.a6 {
  padding: 22px 0 6px;
}

.a7 {
  padding: 7px 0 4px;
}

.a7 p {
  margin: 0 0 7px 5px;
}

.more {
  padding-top: 4px;
  white-space: nowrap;
}

/* Abrechnungstabelle */
.results {
  flex: 1;
  min-width: 0;
  border: 2px solid #4c56a0;
}

.payroll {
  table-layout: fixed;
  width: 1492px;
  border-collapse: separate;
  border-spacing: 0;
}

.payroll th {
  height: 36px;
  padding: 0 4px;
  color: #000;
  font-weight: normal;
  text-align: left;
  white-space: nowrap;
  background: #dadde9;
  border-right: 2px solid #b0b5c2;
  border-bottom: 2px solid #a9afba;
}

.payroll td {
  height: 42px;
  padding: 0 6px 6px 6px;
  color: #0000d8;
  border-right: 2px solid #e6e8ec;
  border-bottom: 2px solid #e6e8ec;
}

.c-m { width: 130px; }
.c-d { width: 182px; }
.c-b { width: 262px; }
.c-j { width: 116px; }
.c-a { width: 150px; }
.c-k { width: 32px; }
.c-u { width: 202px; }
.c-g { width: 106px; }

/* Protokoll */
.log {
  display: flex;
  flex: none;
  height: 88px;
  margin-top: 4px;
  background: #fff;
  border: 2px solid #a3a8bd;
}

.log-text {
  flex: 1;
  padding: 3px 4px;
  color: #000;
}

/* Statuszeile */
.statusbar {
  display: flex;
  flex: none;
  height: 30px;
  overflow: hidden;
  background: linear-gradient(#eef0f5, #d9dce6);
  color: #000;
  font: 24px/38px "DejaVu Sans Condensed", "DejaVu Sans", sans-serif;
}

.statusbar span {
  flex: none;
  padding-left: 6px;
  border-right: 2px solid #b4b8c8;
  white-space: nowrap;
}

.statusbar .s1 {
  width: 600px;
  padding-left: 3px;
}

.s2 { width: 400px; }
.s3 { width: 499px; }
.s4 { width: 281px; }

.statusbar .s5 {
  flex: 1;
  border-right: none;
}

.grip {
  width: 18px;
  height: 20px;
  margin: 5px 8px 0 0;
  fill: #4f557f;
}
```
